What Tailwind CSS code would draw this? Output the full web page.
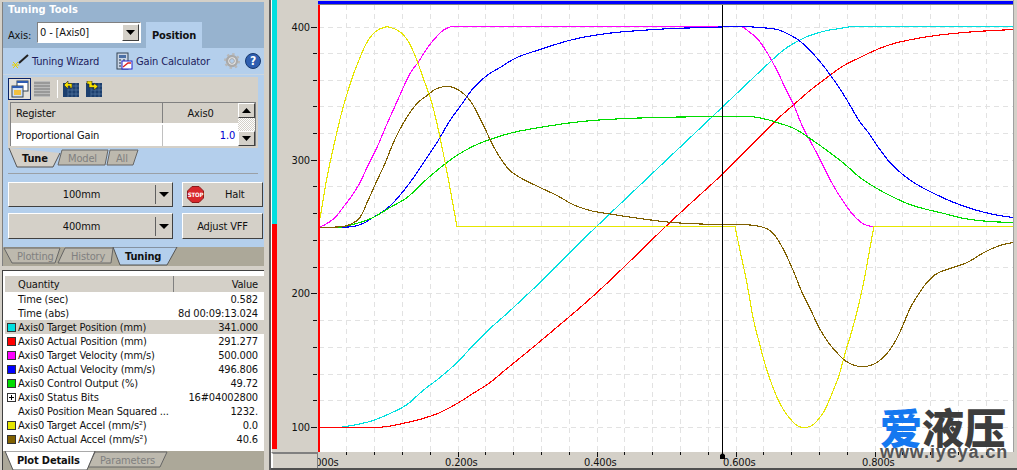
<!DOCTYPE html>
<html>
<head>
<meta charset="utf-8">
<script src="https://cdn.jsdelivr.net/npm/@tailwindcss/browser@4"></script>
</head>
<body class="m-0">
<div class="relative flex w-[1017px] h-[470px] overflow-hidden bg-[#d4d0c8] font-['DejaVu_Sans_Condensed','Liberation_Sans',sans-serif] text-[11px] tracking-[-0.15px] leading-none text-[#111]">

  <!-- LEFT COLUMN -->
  <div class="flex flex-col w-[264px] h-[470px] shrink-0 pt-[2px] pl-[2px]">
    <div class="flex flex-col w-[262px] h-[264px] shrink-0 border-l border-[#808080]">
      <div class="h-[15px] shrink-0 bg-[#97b3cf] pl-[5px] flex items-center font-bold text-white text-[11px] tracking-[0.1px]">Tuning Tools</div>
      <div class="h-[31px] shrink-0 bg-[#97b3cf] flex items-end pl-[5px]">
        <span class="h-[26px] flex items-center w-[29px]">Axis:</span>
        <div class="h-[21px] w-[104px] mb-[5px] bg-white border border-[#808080] border-b-white border-r-white flex items-center pl-[2px] justify-between">
          <span>0 - [Axis0]</span>
          <span class="w-[17px] h-[17px] mr-[1px] bg-[#d4d0c8] border border-[#fff] border-r-[#404040] border-b-[#404040] flex items-center justify-center">
            <svg width="9" height="5" viewBox="0 0 9 5"><path d="M0 0H9L4.5 5Z" fill="#000"/></svg>
          </span>
        </div>
        <div class="ml-[5px] w-[56px] h-[26px] bg-[#b4cfec] flex items-center justify-center font-bold text-[11px]">Position</div>
      </div>
      <div class="flex-1 bg-[#b4cfec] flex flex-col">
        <div class="h-[27px] shrink-0 flex items-center border-b border-[#c9d6e2] pl-[8px] text-[#1c1c5c]">
          <svg width="18" height="18" viewBox="0 0 18 18"><path d="M8 11L17 3" stroke="#222" stroke-width="2"/><path d="M2 10L5 13L2 16M7 10L4 13L7 16M1 13H8" stroke="#e6d000" stroke-width="1" fill="none"/></svg>
          <span class="ml-[3px] w-[84px]">Tuning Wizard</span>
          <svg width="17" height="18" viewBox="0 0 17 18"><rect x="1" y="1" width="11" height="16" fill="#c8d4e4" stroke="#345"/><rect x="3" y="3" width="7" height="3" fill="#4a6fa5"/><path d="M3 8h2M7 8h2M3 11h2M3 14h2" stroke="#234"/><rect x="6" y="9" width="10" height="8" fill="#fff" stroke="#22c"/><path d="M7 15L12 11L15 11" stroke="#d22" stroke-width="1.4" fill="none"/></svg>
          <span class="ml-[3px] w-[87px]">Gain Calculator</span>
          <svg width="18" height="18" viewBox="0 0 18 18"><circle cx="9" cy="9" r="5" fill="#e8e8e8" stroke="#aaa" stroke-width="2.4"/><circle cx="9" cy="9" r="7" fill="none" stroke="#b8b8b8" stroke-width="2" stroke-dasharray="2.4 3.1"/><circle cx="9" cy="9" r="2.4" fill="#b4cfec" stroke="#aaa"/></svg>
          <span class="ml-[4px] w-[16px] h-[16px] rounded-full bg-[#2f5fb0] border border-[#16386f] text-white font-bold text-[12px] flex items-center justify-center">?</span>
        </div>
        <div class="mt-[2px] ml-[5px] w-[250px] h-[71px] shrink-0 bg-[#d4d0c8] flex flex-col">
          <div class="h-[24px] shrink-0 flex items-center">
            <span class="w-[23px] h-[22px] bg-[#e4e2dc] border border-[#0a246a] flex items-center justify-center">
              <svg width="18" height="18" viewBox="0 0 18 18"><rect x="6" y="1" width="11" height="10" fill="#fff" stroke="#345"/><rect x="6" y="1" width="11" height="2" fill="#2d5bb0"/><rect x="1" y="6" width="11" height="11" fill="#cfe0f5" stroke="#345"/><rect x="1" y="6" width="11" height="2" fill="#2d5bb0"/><rect x="3" y="10" width="7" height="5" fill="#f0c040"/></svg>
            </span>
            <span class="ml-[3px] w-[16px] h-[16px] bg-[#a8a8a4] bg-[repeating-linear-gradient(0deg,#bbb_0_1px,#999_1px_3px)]"></span>
            <span class="ml-[7px] w-[1px] h-[18px] bg-[#9a9a9a] border-r border-white"></span>
            <span class="ml-[5px] w-[16px] h-[16px]">
              <svg width="16" height="16" viewBox="0 0 16 16"><rect x="0" y="2" width="16" height="14" fill="#1d3f6e"/><path d="M5 5h11M5 9h11M5 13h11M5 2v14M9 2v14M13 2v14" stroke="#5c7fa8" stroke-width="0.6"/><path d="M1 4L5 0V2.5H9V7H7V5H5V8Z" fill="#f5e000" stroke="#222" stroke-width="0.6"/></svg>
            </span>
            <span class="ml-[7px] w-[16px] h-[16px]">
              <svg width="16" height="16" viewBox="0 0 16 16"><rect x="0" y="2" width="16" height="14" fill="#1d3f6e"/><path d="M5 5h11M5 9h11M5 13h11M5 2v14M9 2v14M13 2v14" stroke="#5c7fa8" stroke-width="0.6"/><path d="M1 0H6V4H8V2L12 5.5L8 9V6.5H3V3H1Z" fill="#f5e000" stroke="#222" stroke-width="0.6"/></svg>
            </span>
          </div>
          <div class="mt-[1px] ml-[2px] w-[246px] h-[44px] flex border border-[#808080] border-b-0">
            <div class="w-[228px] flex flex-col">
              <div class="h-[22px] flex shrink-0 border-b-2 border-[#fff]">
                <div class="w-[152px] pl-[5px] flex items-center border-r border-[#808080]">Register</div>
                <div class="flex-1 flex items-center justify-center">Axis0</div>
              </div>
              <div class="flex-1 flex bg-white">
                <div class="w-[152px] pl-[5px] flex items-center border-r border-[#c0c0c0]">Proportional Gain</div>
                <div class="flex-1 flex items-center justify-end pr-[3px] text-[#0000d0]">1.0</div>
              </div>
            </div>
            <div class="w-[17px] flex flex-col justify-between bg-[repeating-conic-gradient(#d4d0c8_0_25%,#fff_0_50%)] bg-[length:2px_2px]">
              <span class="h-[15px] bg-[#d4d0c8] border border-white border-r-[#404040] border-b-[#404040] flex items-center justify-center"><svg width="9" height="5" viewBox="0 0 9 5"><path d="M0 5H9L4.5 0Z" fill="#000"/></svg></span>
              <span class="h-[15px] bg-[#d4d0c8] border border-white border-r-[#404040] border-b-[#404040] flex items-center justify-center"><svg width="9" height="5" viewBox="0 0 9 5"><path d="M0 0H9L4.5 5Z" fill="#000"/></svg></span>
            </div>
          </div>
        </div>
        <svg class="shrink-0 block" width="261" height="21" viewBox="3 148 261 21">
          <path d="M62 150H108L105 165H58Z" fill="#bdb9ae" stroke="#666"/>
          <path d="M110 150H138L133 165H107Z" fill="#bdb9ae" stroke="#666"/>
          <path d="M9 148L17 167H53L60 153" fill="#d4d0c8" stroke="#555"/>
          <text x="22" y="162" font-weight="700" font-size="11" fill="#111">Tune</text>
          <text x="68" y="162" font-size="11" fill="#808080">Model</text>
          <text x="116" y="162" font-size="11" fill="#808080">All</text>
        </svg>
        <div class="ml-[5px] mt-[4px] w-[250px] h-[1px] shrink-0 bg-[#9aa0a6]"></div>
        <div class="mt-[8px] ml-[5px] flex gap-[9px] shrink-0">
          <div class="w-[165px] h-[25px] bg-[#d4d0c8] border border-white border-r-[#404040] border-b-[#404040] flex items-center">
            <span class="w-[146px] text-center pr-[1px]">100mm</span>
            <span class="w-[1px] h-[19px] bg-[#606060]"></span>
            <svg class="ml-[3px]" width="10" height="5" viewBox="0 0 10 5"><path d="M0 0H10L5 5Z" fill="#000"/></svg>
          </div>
          <div class="w-[81px] h-[25px] bg-[#d4d0c8] border border-white border-r-[#404040] border-b-[#404040] flex items-center pl-[4px]">
            <svg width="17" height="17" viewBox="0 0 17 17"><polygon points="5,0.5 12,0.5 16.5,5 16.5,12 12,16.5 5,16.5 0.5,12 0.5,5" fill="#d8272b" stroke="#8a1a1a"/><text x="8.5" y="11" text-anchor="middle" font-size="6" font-weight="700" fill="#fff">STOP</text></svg>
            <span class="ml-[21px]">Halt</span>
          </div>
        </div>
        <div class="mt-[6px] ml-[5px] flex gap-[9px] shrink-0">
          <div class="w-[165px] h-[26px] bg-[#d4d0c8] border border-white border-r-[#404040] border-b-[#404040] flex items-center">
            <span class="w-[146px] text-center pr-[1px]">400mm</span>
            <span class="w-[1px] h-[19px] bg-[#606060]"></span>
            <svg class="ml-[3px]" width="10" height="5" viewBox="0 0 10 5"><path d="M0 0H10L5 5Z" fill="#000"/></svg>
          </div>
          <div class="w-[81px] h-[26px] bg-[#d4d0c8] border border-white border-r-[#404040] border-b-[#404040] flex items-center justify-center">Adjust VFF</div>
        </div>
        <svg class="shrink-0 block mt-auto" width="261" height="19" viewBox="3 247 261 19">
          <rect x="3" y="247" width="261" height="19" fill="#aca899"/>
          <path d="M4 248H60L55 263H12Z" fill="#bdb9ae" stroke="#666"/>
          <path d="M65 248H113L111 263H58Z" fill="#bdb9ae" stroke="#666"/>
          <path d="M113 247L120 265H167L177 247Z" fill="#b4cfec" stroke="#555"/>
          <text x="17" y="260" font-size="11" fill="#808080">Plotting</text>
          <text x="71" y="260" font-size="11" fill="#808080">History</text>
          <text x="125" y="260" font-size="11" font-weight="700" fill="#111">Tuning</text>
        </svg>
      </div>
    </div>
    <div class="mt-[4px] flex-1 w-[262px] border-l border-t border-[#404040] bg-white flex flex-col pt-[5px]">
      <div class="ml-[2px] h-[16px] shrink-0 flex bg-[#d4d0c8]">
        <div class="w-[169px] pl-[13px] flex items-center border-r border-[#808080]">Quantity</div>
        <div class="flex-1 flex items-center justify-end pr-[6px]">Value</div>
      </div>
      <div class="ml-[2px] flex flex-col flex-1">
        <div class="h-[14px] flex items-center justify-between pl-[13px] pr-[6px]"><span>Time (sec)</span><span>0.582</span></div>
        <div class="h-[14px] flex items-center justify-between pl-[13px] pr-[6px]"><span>Time (abs)</span><span>8d 00:09:13.024</span></div>
        <div class="h-[14px] flex items-center justify-between pl-[2px] pr-[6px] bg-[#d4d0c8]"><span class="flex items-center"><i class="w-[9px] h-[9px] mr-[2px] border border-[#333] bg-[#00e0e0]"></i>Axis0 Target Position (mm)</span><span>341.000</span></div>
        <div class="h-[14px] flex items-center justify-between pl-[2px] pr-[6px]"><span class="flex items-center"><i class="w-[9px] h-[9px] mr-[2px] border border-[#333] bg-[#ff0000]"></i>Axis0 Actual Position (mm)</span><span>291.277</span></div>
        <div class="h-[14px] flex items-center justify-between pl-[2px] pr-[6px]"><span class="flex items-center"><i class="w-[9px] h-[9px] mr-[2px] border border-[#333] bg-[#ff00ff]"></i>Axis0 Target Velocity (mm/s)</span><span>500.000</span></div>
        <div class="h-[14px] flex items-center justify-between pl-[2px] pr-[6px]"><span class="flex items-center"><i class="w-[9px] h-[9px] mr-[2px] border border-[#333] bg-[#0000ff]"></i>Axis0 Actual Velocity (mm/s)</span><span>496.806</span></div>
        <div class="h-[14px] flex items-center justify-between pl-[2px] pr-[6px]"><span class="flex items-center"><i class="w-[9px] h-[9px] mr-[2px] border border-[#333] bg-[#00dc00]"></i>Axis0 Control Output (%)</span><span>49.72</span></div>
        <div class="h-[14px] flex items-center justify-between pl-[2px] pr-[6px]"><span class="flex items-center"><svg class="mr-[2px]" width="9" height="9" viewBox="0 0 9 9"><rect x=".5" y=".5" width="8" height="8" fill="#fff" stroke="#333"/><path d="M2 4.5H7M4.5 2V7" stroke="#000"/></svg>Axis0 Status Bits</span><span>16#04002800</span></div>
        <div class="h-[14px] flex items-center justify-between pl-[13px] pr-[6px]"><span>Axis0 Position Mean Squared ...</span><span>1232.</span></div>
        <div class="h-[14px] flex items-center justify-between pl-[2px] pr-[6px]"><span class="flex items-center"><i class="w-[9px] h-[9px] mr-[2px] border border-[#333] bg-[#e6e600]"></i>Axis0 Target Accel (mm/s²)</span><span>0.0</span></div>
        <div class="h-[14px] flex items-center justify-between pl-[2px] pr-[6px]"><span class="flex items-center"><i class="w-[9px] h-[9px] mr-[2px] border border-[#333] bg-[#806000]"></i>Axis0 Actual Accel (mm/s²)</span><span>40.6</span></div>
      </div>
      <svg class="shrink-0 block" width="261" height="19" viewBox="3 451 261 19">
        <rect x="3" y="451" width="261" height="19" fill="#aca899"/>
        <path d="M95 452H167L160 467H88Z" fill="#bdb9ae" stroke="#666"/>
        <path d="M5 451L13 470H87L95 451Z" fill="#fff" stroke="#555"/>
        <text x="17" y="464" font-size="11" font-weight="700" fill="#111">Plot Details</text>
        <text x="100" y="464" font-size="11" fill="#808080">Parameters</text>
      </svg>
    </div>
  </div>

  <!-- SPLITTER -->
  <div class="w-[7px] h-[470px] shrink-0 bg-[#d4d0c8] border-r-2 border-[#606060]"></div>

  <!-- CHART COLUMN -->
  <div class="flex flex-col flex-1 min-w-0 h-[470px]">
    <div class="flex h-[452px] shrink-0">
      <div class="w-[1px] bg-white"></div>
      <div class="w-[5px] flex flex-col shrink-0">
        <div class="h-[224px] bg-[#00e0e0]"></div>
        <div class="flex-1 mb-[3px] bg-[#ff0000]"></div>
      </div>
      <svg class="block shrink-0" width="41" height="452" viewBox="277 0 41 452">
        <g fill="#111" font-size="11" text-anchor="end">
          <text x="310" y="31">400</text>
          <text x="310" y="164">300</text>
          <text x="310" y="297">200</text>
          <text x="310" y="431">100</text>
        </g>
        <path d="M311 27.5h6M313 53.5h4M313 80.5h4M313 106.5h4M313 133.5h4M311 160.5h6M313 186.5h4M313 213.5h4M313 240.5h4M313 267.5h4M311 293.5h6M313 320.5h4M313 347.5h4M313 374.5h4M313 400.5h4M311 427.5h6" stroke="#111" shape-rendering="crispEdges"/>
      </svg>
      <div class="flex flex-col w-[695px] shrink-0">
        <div class="h-[1px] shrink-0 bg-[#d4d0c8]"></div>
        <div class="h-[3px] shrink-0 bg-[#0000ff]"></div>
        <div class="h-[1px] shrink-0 bg-[#808080]"></div>
        <svg class="block shrink-0" width="695" height="447" viewBox="318 5 695 447">
          <rect x="318" y="5" width="695" height="447" fill="#fff"/>
          <g stroke="#e2e2e2" stroke-dasharray="5 4" shape-rendering="crispEdges" fill="none">
            <path d="M319 27.5H1013M319 53.5H1013M319 80.5H1013M319 106.5H1013M319 133.5H1013M319 160.5H1013M319 186.5H1013M319 213.5H1013M319 240.5H1013M319 267.5H1013M319 293.5H1013M319 320.5H1013M319 347.5H1013M319 374.5H1013M319 400.5H1013M319 427.5H1013"/>
            <path d="M346.5 5V452M374.5 5V452M402.5 5V452M430.5 5V452M458.5 5V452M485.5 5V452M513.5 5V452M541.5 5V452M569.5 5V452M597.5 5V452M624.5 5V452M652.5 5V452M680.5 5V452M708.5 5V452M736.5 5V452M763.5 5V452M791.5 5V452M819.5 5V452M847.5 5V452M875.5 5V452M902.5 5V452M930.5 5V452M958.5 5V452M986.5 5V452"/>
          </g>
          <g id="curves" fill="none" stroke-width="1.15" shape-rendering="crispEdges">
            <polyline stroke="#00e0e0" points="340,427.5 357,424.5 373,420.5 390,413.5 407,404.5 423,390.5 440,377.5 457,362.5 473,345.5 490,328.5 507,313.5 523,298.5 540,282.5 583,239.5 723,106.5 777,55.5 787,47.5 799,40.5 810,35.5 827,30.5 840,28.5 854,26.5 1013,26.5"/>
            <polyline stroke="#ff0000" points="318,427.5 372,427.5 387,426.5 407,422.5 423,418.5 440,412.5 457,403.5 473,393.5 490,382.5 507,368.5 523,355.5 540,341.5 597,292.5 672,220.5 723,173.5 777,119.5 794,104.5 810,90.5 827,77.5 844,65.5 860,57.5 877,49.5 894,43.5 917,38.5 944,34.5 977,31.5 1013,29.5"/>
            <polyline stroke="#ff00ff" points="319,227.5 327,223.5 335,217.5 343,207.5 352,195.5 360,182.5 368,165.5 377,147.5 385,128.5 393,110.5 402,90.5 410,73.5 418,62.5 427,48.5 435,38.5 443,30.5 453,26.5 740,26.5 750,32.5 758,39.5 767,52.5 777,70.5 785,87.5 794,105.5 802,125.5 810,140.5 819,157.5 827,173.5 835,188.5 844,202.5 852,213.5 860,221.5 867,225.5 874,226.5"/>
            <polyline stroke="#0000ff" points="337,227.5 353,226.5 363,223.5 373,217.5 387,208.5 398,197.5 410,182.5 423,163.5 437,142.5 450,120.5 463,102.5 473,88.5 487,75.5 500,67.5 517,57.5 540,49.5 573,39.5 607,33.5 640,30.5 673,28.5 707,27.5 740,26.5 760,27.5 777,29.5 787,33.5 799,40.5 810,50.5 819,60.5 827,70.5 839,87.5 849,103.5 859,120.5 869,133.5 877,145.5 890,162.5 904,175.5 917,184.5 934,193.5 954,202.5 974,209.5 994,214.5 1013,217.5"/>
            <polyline stroke="#00dc00" points="318,227.5 337,227.5 353,224.5 373,217.5 390,207.5 407,197.5 423,182.5 443,165.5 460,153.5 477,144.5 493,138.5 513,132.5 540,127.5 573,122.5 607,119.5 657,117.5 723,116.5 750,116.5 767,119.5 777,122.5 794,128.5 810,138.5 827,150.5 844,163.5 860,177.5 877,188.5 894,197.5 910,204.5 927,209.5 944,213.5 964,218.5 990,221.5 1013,222.5"/>
            <polyline stroke="#e6e600" points="318,226.5 319,223.5 327,177.5 335,140.5 343,107.5 352,78.5 360,57.5 368,40.5 377,30.5 387,26.5 398,30.5 407,39.5 415,55.5 423,77.5 432,103.5 440,137.5 448,177.5 457,226.5 735,226.5 740,250.5 747,283.5 753,317.5 760,345.5 767,370.5 777,397.5 784,410.5 790,418.5 797,425.5 804,427.5 812,425.5 819,418.5 825,409.5 832,393.5 839,375.5 845,353.5 852,330.5 859,303.5 865,275.5 870,247.5 874,226.5 1013,226.5"/>
            <polyline stroke="#806000" points="318,227.5 343,226.5 352,223.5 360,217.5 368,200.5 377,180.5 385,163.5 393,143.5 402,125.5 410,112.5 418,102.5 427,95.5 435,89.5 445,86.5 453,87.5 462,92.5 470,100.5 477,112.5 485,128.5 493,145.5 502,160.5 510,170.5 520,177.5 540,187.5 557,195.5 573,204.5 590,210.5 607,213.5 640,218.5 673,222.5 717,224.5 743,224.5 760,226.5 770,230.5 777,238.5 785,252.5 794,272.5 802,292.5 810,308.5 819,327.5 827,340.5 835,350.5 845,360.5 855,365.5 865,366.5 875,363.5 885,355.5 894,343.5 902,327.5 910,308.5 919,293.5 927,282.5 937,273.5 950,268.5 967,262.5 984,252.5 1000,245.5 1013,242.5"/>
          </g>
          <path d="M319 5V452" stroke="#ff0000" stroke-width="2" shape-rendering="crispEdges"/>
          <path d="M722.5 5V452" stroke="#000" stroke-width="1" shape-rendering="crispEdges"/>
        </svg>
      </div>
      <div class="flex-1 bg-[#d4d0c8] border-l border-[#a0a0a0]"></div>
    </div>
    <div class="flex flex-1 border-b-2 border-[#505050]">
      <div class="w-[47px] shrink-0 border-l-2 border-t-2 border-t-[#808080] border-l-white border-r border-r-[#808080]"></div>
      <svg class="block shrink-0" width="699" height="16" viewBox="318 452 699 16">
        <path d="M346.5 452v3M374.5 452v3M402.5 452v3M430.5 452v3M458.5 452v5M485.5 452v3M513.5 452v3M541.5 452v3M569.5 452v3M597.5 452v5M624.5 452v3M652.5 452v3M680.5 452v3M708.5 452v3M736.5 452v5M763.5 452v3M791.5 452v3M819.5 452v3M847.5 452v3M875.5 452v5M902.5 452v3M930.5 452v3M958.5 452v3M986.5 452v3" stroke="#111" shape-rendering="crispEdges"/>
        <g font-size="11" fill="#111">
          <text x="306" y="466">0.000s</text>
          <text x="445" y="466">0.200s</text>
          <text x="584" y="466">0.400s</text>
          <text x="723" y="466">0.600s</text>
          <text x="862" y="466">0.800s</text>
        </g>
        <path d="M720 455L722.5 453L725 455V459H720Z" fill="#000"/>
        <path d="M722.5 452V455" stroke="#000"/>
      </svg>
    </div>
  </div>

  <!-- WATERMARK -->
  <div class="absolute left-[880px] top-[408px] w-[132px] flex flex-col items-start">
    <div class="flex h-[35px] items-center font-['Noto_Sans_CJK_SC',sans-serif] font-black text-[42px] tracking-normal leading-none text-[#3d3d3d]"><span class="text-[#1478f0]">爱</span><span>液压</span></div>
    <div class="font-['Liberation_Sans',sans-serif] font-bold text-[18px] tracking-[0.9px] text-[#555] leading-none">www.iyeya.cn</div>
  </div>
</div>
<script>
// Resample each measured curve through a length-scaled Hermite spline, keeping real corners sharp.
document.querySelectorAll('#curves polyline').forEach(function (line) {
  var p = line.getAttribute('points').trim().split(/\s+/).map(function (s) { return s.split(',').map(Number); });
  var L = [];
  for (var j = 0; j < p.length - 1; j++) L.push(Math.hypot(p[j+1][0] - p[j][0], p[j+1][1] - p[j][1]));
  function corner(i) {
    if (i <= 0 || i >= p.length - 1) return true;
    var a = Math.atan2(p[i][1] - p[i-1][1], p[i][0] - p[i-1][0]);
    var b = Math.atan2(p[i+1][1] - p[i][1], p[i+1][0] - p[i][0]);
    return Math.abs(a - b) > 0.6;
  }
  function tangent(i, seg) {
    if (corner(i)) return [(p[seg+1][0] - p[seg][0]) / L[seg], (p[seg+1][1] - p[seg][1]) / L[seg]];
    var d = L[i-1] + L[i];
    return [(p[i+1][0] - p[i-1][0]) / d, (p[i+1][1] - p[i-1][1]) / d];
  }
  var out = [p[0]];
  for (var i = 0; i < p.length - 1; i++) {
    var a = p[i], b = p[i+1], s = L[i], ta = tangent(i, i), tb = tangent(i+1, i);
    var n = a[1] === b[1] ? 1 : Math.max(2, Math.ceil(Math.abs(b[0] - a[0]) / 2));
    for (var k = 1; k <= n; k++) {
      var t = k / n, t2 = t * t, t3 = t2 * t;
      out.push([0, 1].map(function (c) {
        return (2*t3 - 3*t2 + 1) * a[c] + (t3 - 2*t2 + t) * s * ta[c] + (3*t2 - 2*t3) * b[c] + (t3 - t2) * s * tb[c];
      }));
    }
  }
  line.setAttribute('points', out.map(function (q) { return q[0].toFixed(2) + ',' + q[1].toFixed(2); }).join(' '));
});
</script>
</body>
</html>
